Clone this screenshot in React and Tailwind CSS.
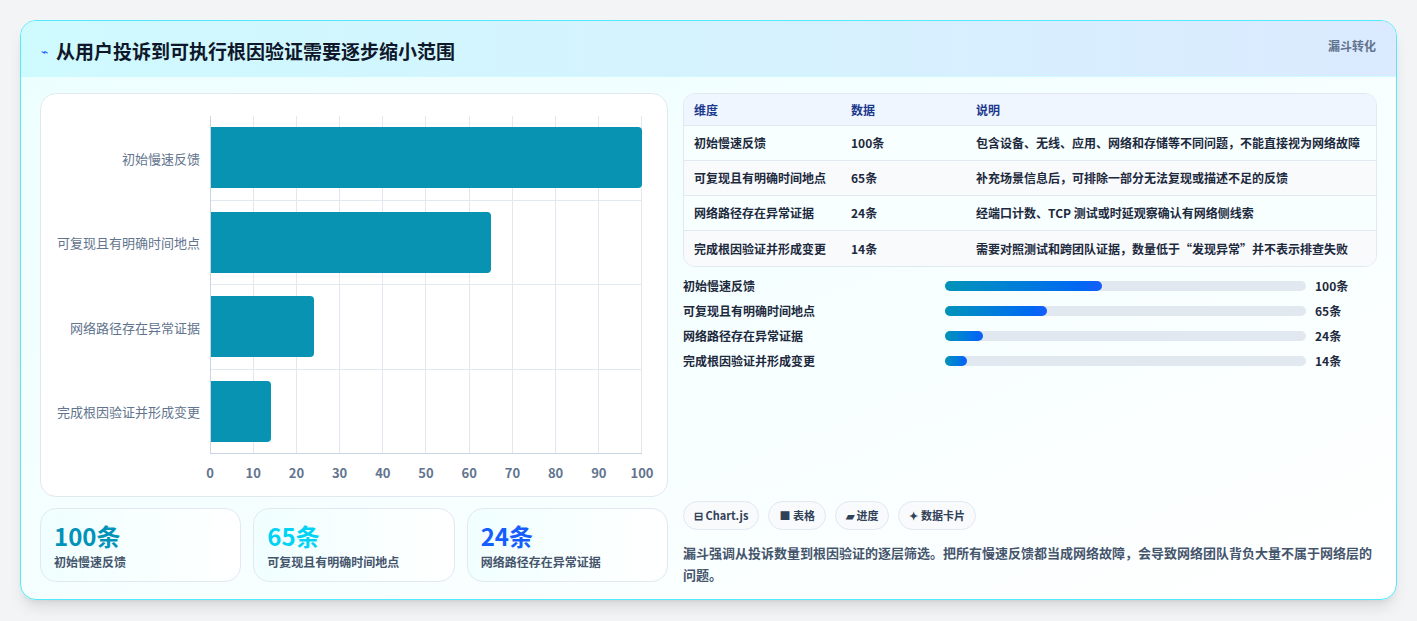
const FONT = { fontFamily: '"Noto Sans CJK SC", "Noto Sans", sans-serif' };

const ROWS = [
  { name: '初始慢速反馈', value: 100, note: '包含设备、无线、应用、网络和存储等不同问题，不能直接视为网络故障' },
  { name: '可复现且有明确时间地点', value: 65, note: '补充场景信息后，可排除一部分无法复现或描述不足的反馈' },
  { name: '网络路径存在异常证据', value: 24, note: '经端口计数、TCP 测试或时延观察确认有网络侧线索' },
  { name: '完成根因验证并形成变更', value: 14, note: '需要对照测试和跨团队证据，数量低于“发现异常”并不表示排查失败' },
];

function BarChart() {
  const ticks = [0, 10, 20, 30, 40, 50, 60, 70, 80, 90, 100];
  return (
    <div className="flex h-[404px] flex-col rounded-2xl border border-slate-200 bg-white pt-[22px] pr-[25px]">
      <div className="flex h-[338px]">
        <div className="flex w-[169px] flex-col">
          {ROWS.map((r) => (
            <div key={r.name} className="flex flex-1 items-center justify-end pr-[10px] text-[13px] text-slate-500">{r.name}</div>
          ))}
        </div>
        <div className="relative flex-1 border-l border-b border-slate-300">
          <div className="absolute inset-0 flex">
            {ticks.slice(1).map((t) => (
              <div key={t} className="flex-1 border-r border-slate-200" />
            ))}
          </div>
          <div className="absolute inset-0 flex flex-col">
            {ROWS.map((r, i) => (
              <div key={r.name} className={`flex flex-1 items-center ${i ? 'border-t border-slate-200' : ''}`}>
                <div className="h-[61px] rounded-r-sm bg-[#0893b3]" style={{ width: `${r.value}%` }} />
              </div>
            ))}
          </div>
        </div>
      </div>
      <div className="relative ml-[169px] h-[34px] text-[13px] font-semibold text-slate-500">
        {ticks.map((t) => (
          <span key={t} className="absolute top-[9px] -translate-x-1/2" style={{ left: `${t}%` }}>{t}</span>
        ))}
      </div>
    </div>
  );
}

function Stat({ value, label, color }) {
  return (
    <div className="flex-1 rounded-2xl border border-slate-200 bg-gradient-to-r from-cyan-50/60 to-white px-[13px] pt-[10px] pb-[10px]">
      <div className={`text-[24px] font-bold leading-[34px] ${color}`}>{value}</div>
      <div className="text-[12px] font-semibold text-slate-600">{label}</div>
    </div>
  );
}

export default function App() {
  return (
    <div style={FONT} className="h-[621px] w-[1417px] bg-[#f3f4f6] pt-[20px] pl-[20px]">
      <div className="w-[1377px] h-[580px] overflow-hidden rounded-2xl border border-cyan-300 bg-gradient-to-br from-cyan-50 to-white shadow-lg">
        <div className="flex h-[56px] items-start justify-between bg-gradient-to-r from-cyan-100 to-blue-100 px-[20px] pt-[16px] border-b border-cyan-100">
          <div className="flex items-center gap-[8px]">
            <span className="text-[12px] text-blue-600">⌁</span>
            <h1 className="text-[19px] font-bold text-slate-900">从用户投诉到可执行根因验证需要逐步缩小范围</h1>
          </div>
          <span className="text-[12px] font-semibold text-slate-500">漏斗转化</span>
        </div>
        <div className="flex gap-[15px] px-[19px] pt-[16px]">
          <div className="flex w-[628px] flex-col gap-[11px]">
            <BarChart />
            <div className="flex gap-[12px]">
              <Stat value="100条" label="初始慢速反馈" color="text-cyan-600" />
              <Stat value="65条" label="可复现且有明确时间地点" color="text-cyan-400" />
              <Stat value="24条" label="网络路径存在异常证据" color="text-blue-600" />
            </div>
          </div>
          <div className="flex flex-1 flex-col">
            <div className="overflow-hidden rounded-xl border border-slate-200 bg-white text-[12px]">
              <div className="flex h-[32px] items-center border-b border-slate-200 bg-blue-50 font-semibold text-blue-900">
                <div className="w-[167px] pl-[10px]">维度</div>
                <div className="w-[125px]">数据</div>
                <div>说明</div>
              </div>
              {ROWS.map((r, i) => (
                <div key={r.name} className={`flex h-[35px] items-center font-semibold text-slate-800 ${i % 2 ? 'bg-slate-50' : 'bg-cyan-50/40'} ${i < 3 ? 'border-b border-slate-200' : ''}`}>
                  <div className="w-[167px] pl-[10px]">{r.name}</div>
                  <div className="w-[125px]">{r.value}条</div>
                  <div className="whitespace-nowrap">{r.note}</div>
                </div>
              ))}
            </div>
            <div className="mt-[12px] flex flex-col gap-[11px]">
              {ROWS.map((r) => (
                <div key={r.name} className="flex h-[14px] items-center text-[12px] font-semibold text-slate-800">
                  <div className="w-[262px]">{r.name}</div>
                  <div className="h-[10px] w-[361px] rounded-full bg-slate-200">
                    <div className="h-full rounded-full bg-gradient-to-r from-cyan-600 to-blue-600" style={{ width: `${r.value * 0.435}%` }} />
                  </div>
                  <div className="ml-[9px]">{r.value}条</div>
                </div>
              ))}
            </div>
            <div className="mt-[133px] flex gap-[9px] text-[11px] font-semibold text-slate-700">
              {['⊟ Chart.js', '■ 表格', '▰ 进度', '✦ 数据卡片'].map((c) => (
                <span key={c} className="rounded-full border border-slate-200 bg-slate-50 px-[10px] py-[5px]">{c}</span>
              ))}
            </div>
            <p className="mt-[12px] text-[13px] font-semibold leading-[22px] text-slate-600">
              漏斗强调从投诉数量到根因验证的逐层筛选。把所有慢速反馈都当成网络故障，会导致网络团队背负大量不属于网络层的问题。
            </p>
          </div>
        </div>
      </div>
    </div>
  );
}
